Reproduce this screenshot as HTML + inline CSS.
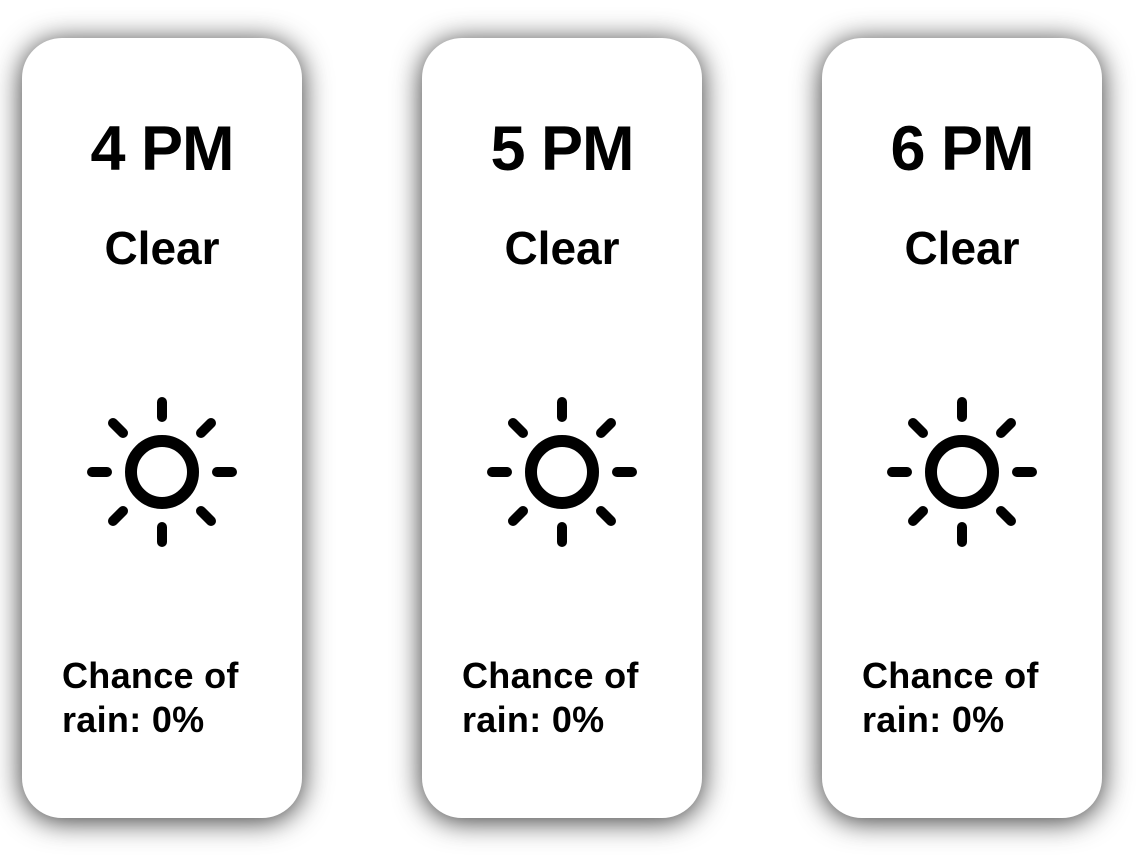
<!DOCTYPE html>
<html><head><style>
body{margin:0;width:1144px;height:862px;background:#fff;position:relative;overflow:hidden;font-family:"Liberation Sans",sans-serif;font-weight:bold;color:#000}
.card{position:absolute;top:38px;width:280px;height:780px;background:#fff;border-radius:40px;box-shadow:0 3px 28px rgba(0,0,0,0.8)}
.t{position:absolute;top:74px;left:0;width:280px;text-align:center;font-size:63px;line-height:74px;letter-spacing:-1px}
.c{position:absolute;top:184px;left:0;width:280px;text-align:center;font-size:46px;line-height:52px}
.r{position:absolute;top:616px;left:40px;font-size:36px;line-height:44px;letter-spacing:0.3px}
svg{position:absolute;left:60px;top:354px}
</style></head><body>
<div class="card" style="left:22px"><div class="t">4 PM</div><div class="c">Clear</div>
<svg width="160" height="160" viewBox="-80 -80 160 160"><circle r="31" fill="none" stroke="#000" stroke-width="12"/><g stroke="#000" stroke-width="10" stroke-linecap="round"><line x1="0" y1="-55" x2="0" y2="-70"/><line x1="0" y1="55" x2="0" y2="70"/><line x1="-55" y1="0" x2="-70" y2="0"/><line x1="55" y1="0" x2="70" y2="0"/><line x1="-39" y1="-39" x2="-49" y2="-49"/><line x1="39" y1="-39" x2="49" y2="-49"/><line x1="-39" y1="39" x2="-49" y2="49"/><line x1="39" y1="39" x2="49" y2="49"/></g></svg>
<div class="r">Chance of<br>rain: 0%</div></div>
<div class="card" style="left:422px"><div class="t">5 PM</div><div class="c">Clear</div>
<svg width="160" height="160" viewBox="-80 -80 160 160"><circle r="31" fill="none" stroke="#000" stroke-width="12"/><g stroke="#000" stroke-width="10" stroke-linecap="round"><line x1="0" y1="-55" x2="0" y2="-70"/><line x1="0" y1="55" x2="0" y2="70"/><line x1="-55" y1="0" x2="-70" y2="0"/><line x1="55" y1="0" x2="70" y2="0"/><line x1="-39" y1="-39" x2="-49" y2="-49"/><line x1="39" y1="-39" x2="49" y2="-49"/><line x1="-39" y1="39" x2="-49" y2="49"/><line x1="39" y1="39" x2="49" y2="49"/></g></svg>
<div class="r">Chance of<br>rain: 0%</div></div>
<div class="card" style="left:822px"><div class="t">6 PM</div><div class="c">Clear</div>
<svg width="160" height="160" viewBox="-80 -80 160 160"><circle r="31" fill="none" stroke="#000" stroke-width="12"/><g stroke="#000" stroke-width="10" stroke-linecap="round"><line x1="0" y1="-55" x2="0" y2="-70"/><line x1="0" y1="55" x2="0" y2="70"/><line x1="-55" y1="0" x2="-70" y2="0"/><line x1="55" y1="0" x2="70" y2="0"/><line x1="-39" y1="-39" x2="-49" y2="-49"/><line x1="39" y1="-39" x2="49" y2="-49"/><line x1="-39" y1="39" x2="-49" y2="49"/><line x1="39" y1="39" x2="49" y2="49"/></g></svg>
<div class="r">Chance of<br>rain: 0%</div></div>
</body></html>
